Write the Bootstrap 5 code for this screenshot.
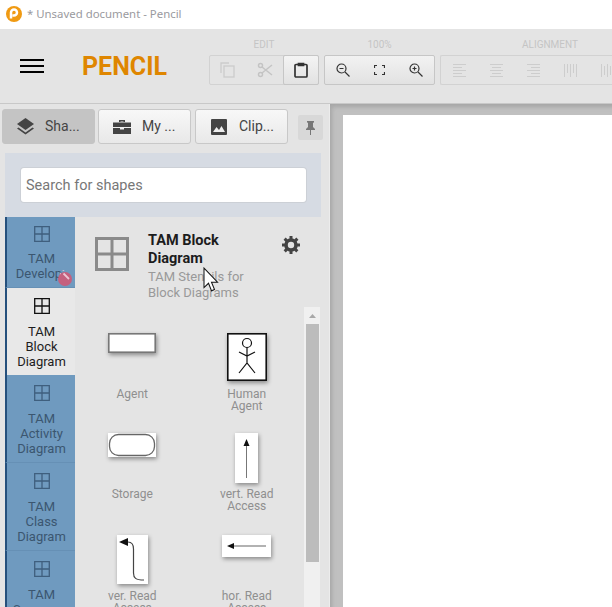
<!DOCTYPE html>
<html lang="en">
<head>
  <meta charset="UTF-8">
  <title>Unsaved document - Pencil</title>
  <link href="https://cdn.jsdelivr.net/npm/bootstrap@5.3.2/dist/css/bootstrap.min.css" rel="stylesheet">
  <style>
    html, body { height: 607px; overflow: hidden; }
    body { font-family: Roboto, "Liberation Sans", sans-serif; background: #fff; position: relative; }
    .title-bar { height: 29px; padding: 0 0 1px 6px; gap: 5px; font-family: "Noto Sans", "DejaVu Sans", sans-serif; font-size: 11.4px; color: #9a9a9e; }
    .tool-bar { height: 75px; background: #e4e4e4; border-bottom: 1px solid #c8c8c8; overflow: hidden; }
    .menu-btn { width: 82px; padding-left: 20px; flex: none; }
    .brand-name { width: 127px; flex: none; font-size: 25px; font-weight: 700; color: #df8600; line-height: 1; margin-top: 1px; }
    .tool-group { margin-right: 5px; padding-top: 10px; flex: none; }
    .tool-label { font-size: 10px; color: #c4c4c4; text-align: center; height: 16px; line-height: 12px; }
    .label-wide { width: 220px; }
    .tool-btns { height: 30px; border: 1px solid #d2d2d2; border-radius: 2px; }
    .tool-btns.live { border-color: #c6c6c6; background: linear-gradient(#f2f2f2, #e2e2e2); }
    .edit-btns { width: 110px; }
    .zoom-btns { width: 111px; }
    .tool-btn { width: 37px; height: 100%; flex: none; }
    .edit-btns .tool-btn { width: 36.500px; }
    .zoom-btns .tool-btn { width: 36.330px; }
    .edit-btns .tool-btn.on { background: linear-gradient(#f4f4f4, #e2e2e2); border: 1px solid #c6c6c6; border-radius: 2px; margin: -1px -1px -1px 0; width: 36px; height: 30px; }
    .work-area { height: 503px; }
    .left-panel { width: 330px; background: #e4e4e4; flex: none; border-right: 1px solid #ececec; }
    .tab-row { height: 49px; padding: 5px 0 0 2px; gap: 3px; }
    .tab-btn { width: 93px; height: 35px; border: 1px solid #c8c8c8; border-radius: 3px; background: linear-gradient(#f8f8f8, #e8e8e8); font-size: 14px; color: #444; padding-left: 14px; gap: 11px; }
    .tab-btn.on { background: #c4c4c4; border-color: #c4c4c4; }
    .tab-btn.third { margin-left: 1px; padding-left: 15px; gap: 12px; }
    .pin-btn { width: 25px; height: 25px; background: #d8d8d8; border-radius: 2px; margin: 6px 0 0 7px; }
    .search-box { margin: 0 8px 0 5px; height: 64px; background: #d6dbe3; padding: 15px 16px 0 16px; }
    .search-input { height: 34px; width: 285px; border: 0; border-radius: 3px; background: #fff; font-size: 14.500px; padding: 0 5px; color: #777; line-height: 35px; box-shadow: 0 0 0 1px #ccd0d6; }
    .panel-body { height: 390px; margin-left: 5px; overflow: hidden; }
    .side-tabs { width: 70px; flex: none; }
    .side-tab { background: #6f9abf; border-left: 2px solid #25507c; border-bottom: 1px solid #6690b5; color: #3b5670; font-size: 13px; line-height: 15px; text-align: center; height: 88px; padding: 10px 0 0 1px; }
    .side-tab svg { display: block; margin: 0 auto 10px; }
    .side-tab.first { height: 71px; position: relative; padding-top: 9px; }
    .side-tab.first svg { margin-bottom: 9px; }
    .tab-name { white-space: nowrap; overflow: hidden; }
    .dev-word { display: inline-block; margin-left: -5px; }
    .side-tab.on { background: #e8e8e8; color: #1d1d1d; height: 87px; border-bottom: 0; }
    .wrench-mark { position: absolute; left: 51px; top: 55px; width: 14px; height: 14px; border-radius: 50%; background: #c4607f; }
    .wrench-mark svg { margin: 0; }
    .lib-view { flex: 1; min-width: 0; }
    .lib-head { height: 90px; padding: 20px 0 0 20px; }
    .lib-icon { width: 34px; margin-right: 19px; flex: none; }
    .lib-text { width: 126px; flex: none; margin-top: -5px; }
    .lib-title { font-size: 14.500px; font-weight: 700; line-height: 18px; color: #1c1c1c; }
    .lib-desc { font-size: 13px; line-height: 16px; color: #999; margin-top: 1px; }
    .lib-gear { margin-left: 8px; margin-top: -1px; }
    .shape-area { height: 300px; }
    .shape-grid { width: 229px; flex: none; padding: 26px 0 0 0; }
    .shape-cell { width: 50%; height: 102px; text-align: center; font-size: 12px; line-height: 12px; color: #8f8f8f; }
    .shape-cell:nth-child(-n+2) { height: 100px; }
    .shape-pic { height: 55px; }
    .shape-pic svg { display: block; margin: 0 auto; filter: drop-shadow(1px 2px 2px rgba(0,0,0,.4)); }
    .shape-name { padding: 0 28px; }
    .scroll-track { width: 16px; background: #f0f0f0; }
    .scroll-arrow { height: 17px; color: #a8a8a8; }
    .scroll-thumb { height: 238px; width: 13px; margin-left: 2px; background: #bcbcbc; }
    .canvas-wrap { flex: 1; min-width: 0; background: #c0c0c0; padding: 11px 0 0 13px; box-shadow: inset 4px 5px 4px -2px #a6a6a6; }
    .canvas-page { background: #fff; height: 100%; }
    .mouse-cursor { position: absolute; left: 203px; top: 267px; }
  </style>
</head>
<body>
  <div class="title-bar d-flex align-items-center">
    <svg width="16" height="16" viewBox="0 0 16 16">
      <circle cx="8" cy="8" r="8" fill="#f09a12"/>
      <path d="M5 12.500V6.500a3 3 0 1 1 3 3H6.500" fill="none" stroke="#fff" stroke-width="2.500"/>
    </svg>
    <span>* Unsaved document - Pencil</span>
  </div>

  <div class="tool-bar d-flex align-items-center">
    <div class="menu-btn">
      <svg width="24" height="16" viewBox="0 0 24 16" class="d-block"><path d="M0 2h24M0 8h24M0 14h24" stroke="#000" stroke-width="2.200"/></svg>
    </div>
    <div class="brand-name">PENCIL</div>
    <div class="tool-group align-self-start">
      <div class="tool-label">EDIT</div>
      <div class="tool-btns edit-btns d-flex">
        <div class="tool-btn d-flex align-items-center justify-content-center">
          <svg width="16" height="16" viewBox="0 0 16 16" fill="none" stroke="#cbcbcb" stroke-width="1.300"><path d="M1 11V1h8"/><rect x="4" y="4" width="10" height="11"/></svg>
        </div>
        <div class="tool-btn d-flex align-items-center justify-content-center">
          <svg width="16" height="16" viewBox="0 0 16 16" fill="none" stroke="#c4c4c4" stroke-width="1.500"><circle cx="3.500" cy="3.500" r="2"/><circle cx="3.500" cy="12.500" r="2"/><path d="M5 5l10 8M5 11l10-8"/></svg>
        </div>
        <div class="tool-btn on d-flex align-items-center justify-content-center">
          <svg width="16" height="16" viewBox="0 0 16 16" fill="none" stroke="#333" stroke-width="1.700"><rect x="2" y="2.500" width="12" height="12.500" rx="1"/><path d="M5.500 3.500V1.500h5v2z" fill="#333"/></svg>
        </div>
      </div>
    </div>
    <div class="tool-group align-self-start">
      <div class="tool-label">100%</div>
      <div class="tool-btns live zoom-btns d-flex">
        <div class="tool-btn d-flex align-items-center justify-content-center">
          <svg width="14" height="14" viewBox="0 0 14 14" fill="none" stroke="#333" stroke-width="1.200"><circle cx="5.500" cy="5.500" r="4.500"/><path d="M9 9l4.500 4.500M3.500 5.500h4"/></svg>
        </div>
        <div class="tool-btn d-flex align-items-center justify-content-center">
          <svg width="11" height="10" viewBox="0 0 11 10" fill="none" stroke="#333" stroke-width="1.200"><path d="M.5 3V.5H3M8 .500h2.500V3M.5 7v2.500H3M8 9.500h2.500V7"/></svg>
        </div>
        <div class="tool-btn d-flex align-items-center justify-content-center">
          <svg width="14" height="14" viewBox="0 0 14 14" fill="none" stroke="#333" stroke-width="1.200"><circle cx="5.500" cy="5.500" r="4.500"/><path d="M9 9l4.500 4.500M3.500 5.500h4M5.500 3.500v4"/></svg>
        </div>
      </div>
    </div>
    <div class="tool-group align-self-start me-0">
      <div class="tool-label label-wide">ALIGNMENT</div>
      <div class="tool-btns d-flex border-end-0">
        <div class="tool-btn d-flex align-items-center justify-content-center">
          <svg width="13" height="13" viewBox="0 0 13 13" stroke="#cdcdcd"><path d="M0 .5h13M0 3.500h9M0 6.500h13M0 9.500h9M0 12.500h13"/></svg>
        </div>
        <div class="tool-btn d-flex align-items-center justify-content-center">
          <svg width="13" height="13" viewBox="0 0 13 13" stroke="#cdcdcd"><path d="M0 .5h13M2 3.500h9M0 6.500h13M2 9.500h9M0 12.500h13"/></svg>
        </div>
        <div class="tool-btn d-flex align-items-center justify-content-center">
          <svg width="13" height="13" viewBox="0 0 13 13" stroke="#cdcdcd"><path d="M0 .5h13M4 3.500h9M0 6.500h13M4 9.500h9M0 12.500h13"/></svg>
        </div>
        <div class="tool-btn d-flex align-items-center justify-content-center">
          <svg width="13" height="13" viewBox="0 0 13 13" stroke="#cdcdcd"><path d="M.5 0v13M3.500 0v9M6.500 0v13M9.500 0v9M12.500 0v13"/></svg>
        </div>
        <div class="tool-btn d-flex align-items-center justify-content-center">
          <svg width="13" height="13" viewBox="0 0 13 13" stroke="#cdcdcd"><path d="M.5 0v13M3.500 2v9M6.500 0v13M9.500 2v9M12.500 0v13"/></svg>
        </div>
      </div>
    </div>
  </div>

  <div class="work-area d-flex">
    <div class="left-panel">
      <div class="tab-row d-flex">
        <div class="tab-btn on d-flex align-items-center">
          <svg width="17" height="17" viewBox="0 0 17 17" fill="#444"><path d="M8.500 0L17 6l-8.500 6L0 6z"/><path d="M1.500 9.500L0 10.600l8.500 6 8.500-6-1.500-1.100-7 5z"/></svg>
          <span>Sha...</span>
        </div>
        <div class="tab-btn d-flex align-items-center">
          <svg width="18" height="16" viewBox="0 0 18 16" fill="#444"><path d="M6 3V1h6v2h-1.500V2.500h-3V3z"/><path d="M0 3.500h18V8H0zM0 9h7v1.500h4V9h7v6H0z"/></svg>
          <span>My ...</span>
        </div>
        <div class="tab-btn third d-flex align-items-center">
          <svg width="16" height="16" viewBox="0 0 16 16"><rect width="16" height="16" rx="1" fill="#444"/><path d="M2 13l3.500-5 2.500 3 2.500-4L14 13z" fill="#eee"/></svg>
          <span>Clip...</span>
        </div>
        <div class="pin-btn d-flex align-items-center justify-content-center">
          <svg width="9" height="14" viewBox="0 0 9 14" fill="#777"><path d="M1 0h7v1.200L7 2v4l2 2v1H0V8l2-2V2L1 1.200zM4 9h1v5H4z"/></svg>
        </div>
      </div>
      <div class="search-box">
        <div class="search-input">Search for shapes</div>
      </div>
      <div class="panel-body d-flex">
        <div class="side-tabs">
          <div class="side-tab first">
            <svg width="16" height="16" viewBox="0 0 16 16" fill="none" stroke="#3f5f7e" stroke-width="1.300"><path d="M.7.7h14.600v14.600H.7zM8 .7v14.600M.7 8h14.600"/></svg>
            <div class="tab-name">TAM<br><span class="dev-word">Develop</span></div>
            <div class="wrench-mark d-flex align-items-center justify-content-center">
              <svg width="10" height="10" viewBox="0 0 10 10" fill="none" stroke="#ecc6d4" stroke-width="1.800"><path d="M3.500 3.500L9 9"/><path d="M3.500.8A2.500 2.500 0 1 0 .8 3.500" stroke-width="1.500"/></svg>
            </div>
          </div>
          <div class="side-tab on">
            <svg width="16" height="16" viewBox="0 0 16 16" fill="none" stroke="#111" stroke-width="1.300"><path d="M.7.7h14.600v14.600H.7zM8 .7v14.600M.7 8h14.600"/></svg>
            TAM<br>Block<br>Diagram
          </div>
          <div class="side-tab">
            <svg width="16" height="16" viewBox="0 0 16 16" fill="none" stroke="#3f5f7e" stroke-width="1.300"><path d="M.7.7h14.600v14.600H.7zM8 .7v14.600M.7 8h14.600"/></svg>
            TAM<br>Activity<br>Diagram
          </div>
          <div class="side-tab">
            <svg width="16" height="16" viewBox="0 0 16 16" fill="none" stroke="#3f5f7e" stroke-width="1.300"><path d="M.7.7h14.600v14.600H.7zM8 .7v14.600M.7 8h14.600"/></svg>
            TAM<br>Class<br>Diagram
          </div>
          <div class="side-tab">
            <svg width="16" height="16" viewBox="0 0 16 16" fill="none" stroke="#3f5f7e" stroke-width="1.300"><path d="M.7.7h14.600v14.600H.7zM8 .7v14.600M.7 8h14.600"/></svg>
            TAM<br>Sequence<br>Diagram
          </div>
        </div>
        <div class="lib-view">
          <div class="lib-head d-flex">
            <div class="lib-icon">
              <svg width="34" height="34" viewBox="0 0 34 34" fill="none" stroke="#8a8a8a" stroke-width="3"><path d="M1.500 1.500h31v31h-31zM17 1.500v31M1.500 17h31"/></svg>
            </div>
            <div class="lib-text">
              <div class="lib-title">TAM Block Diagram</div>
              <div class="lib-desc">TAM Stencils for Block Diagrams</div>
            </div>
            <div class="lib-gear">
              <svg width="18" height="18" viewBox="0 0 18 18" class="d-block"><circle cx="9" cy="9" r="5" fill="none" stroke="#444" stroke-width="3.600"/><path d="M9 0v18M0 9h18M2.600 2.600l12.800 12.800M15.400 2.600L2.600 15.400" stroke="#444" stroke-width="3" stroke-dasharray="3.200 11.600"/></svg>
            </div>
          </div>
          <div class="shape-area d-flex">
            <div class="shape-grid d-flex flex-wrap align-content-start">
              <div class="shape-cell">
                <div class="shape-pic">
                  <svg width="48" height="20" viewBox="0 0 48 20"><rect x=".8" y=".8" width="46.400" height="18.400" fill="#fff" stroke="#777" stroke-width="1.600"/></svg>
                </div>
                <div class="shape-name">Agent</div>
              </div>
              <div class="shape-cell">
                <div class="shape-pic">
                  <svg width="40" height="48" viewBox="0 0 40 48" fill="none" stroke="#111"><rect x=".8" y=".8" width="38.400" height="46.400" fill="#fff" stroke-width="1.600"/><circle cx="20" cy="10" r="4.500" stroke-width="1.200"/><path d="M20 14.500v15M12 19l8 4 8-4M12 40l8-10 8 10" stroke-width="1.200"/></svg>
                </div>
                <div class="shape-name">Human Agent</div>
              </div>
              <div class="shape-cell">
                <div class="shape-pic">
                  <svg width="48" height="24" viewBox="0 0 48 24"><rect width="48" height="24" fill="#fff"/><rect x="1.500" y="1.500" width="45" height="21" rx="9" fill="#fff" stroke="#666" stroke-width="1.300"/></svg>
                </div>
                <div class="shape-name">Storage</div>
              </div>
              <div class="shape-cell">
                <div class="shape-pic">
                  <svg width="23" height="50" viewBox="0 0 23 50"><rect width="23" height="50" fill="#fff"/><path d="M11.500 12v33" stroke="#777"/><path d="M11.500 6l-3 7h6z" fill="#111"/></svg>
                </div>
                <div class="shape-name">vert. Read Access</div>
              </div>
              <div class="shape-cell">
                <div class="shape-pic">
                  <svg width="31" height="49" viewBox="0 0 31 49"><rect width="31" height="49" fill="#fff"/><path d="M11 7c4 0 5.500 2 5.500 7v24c0 5 2 7 10.500 7" fill="none" stroke="#444" stroke-width="1.200"/><path d="M2 7l9-4v8z" fill="#111"/></svg>
                </div>
                <div class="shape-name">ver. Read Access</div>
              </div>
              <div class="shape-cell">
                <div class="shape-pic">
                  <svg width="49" height="22" viewBox="0 0 49 22"><rect width="49" height="22" fill="#fff"/><path d="M10 11h34" stroke="#999" stroke-width="1.300"/><path d="M5 11l7-3v6z" fill="#111"/></svg>
                </div>
                <div class="shape-name">hor. Read Access</div>
              </div>
            </div>
            <div class="scroll-track">
              <div class="scroll-arrow d-flex align-items-center justify-content-center">
                <svg width="7" height="4" viewBox="0 0 7 4" fill="#a8a8a8"><path d="M3.500 0L7 4H0z"/></svg>
              </div>
              <div class="scroll-thumb"></div>
            </div>
          </div>
        </div>
      </div>
    </div>
    <div class="canvas-wrap">
      <div class="canvas-page"></div>
    </div>
  </div>

  <svg class="mouse-cursor" width="16" height="26" viewBox="0 0 16 24" preserveAspectRatio="none">
    <path d="M1 1v18l4.500-4 3 7 3-1.300-3-6.700h6z" fill="#fff" stroke="#111" stroke-width="1"/>
  </svg>

  <script src="https://cdn.jsdelivr.net/npm/bootstrap@5.3.2/dist/js/bootstrap.bundle.min.js"></script>
</body>
</html>
